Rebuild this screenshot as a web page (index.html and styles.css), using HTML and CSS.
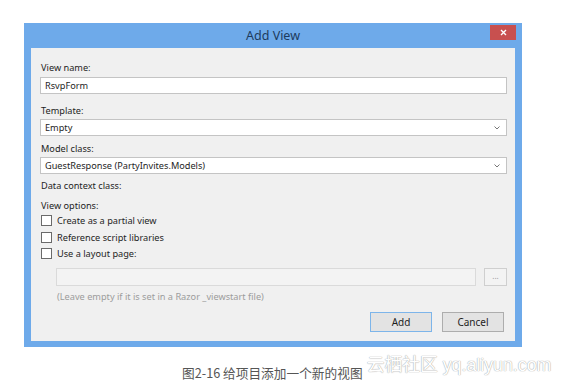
FILE: index.html
```html
<!DOCTYPE html>
<html lang="zh">
<head>
  <meta charset="UTF-8">
  <title>Add View</title>
  <meta name="viewport" content="width=device-width, initial-scale=1.0">
  <link rel="stylesheet" href="styles.css">
</head>
<body>
  <div class="window">
    <div class="titlebar">
      <span></span>
      <span class="title">Add View</span>
      <span class="close">
        <svg width="7" height="7" viewBox="0 0 7 7"><path d="M1 1L6 6M6 1L1 6" stroke="#fff" stroke-width="1.4"/></svg>
      </span>
    </div>

    <div class="content">
      <div class="label first">View name:</div>
      <div class="field name">RsvpForm</div>

      <div class="label">Template:</div>
      <div class="field select">
        <span>Empty</span>
        <svg class="arrow" width="6" height="4" viewBox="0 0 6 4"><path d="M0.5 0.5L3 3L5.5 0.5" fill="none" stroke="#777" stroke-width="1"/></svg>
      </div>

      <div class="label">Model class:</div>
      <div class="field select">
        <span>GuestResponse (PartyInvites.Models)</span>
        <svg class="arrow" width="6" height="4" viewBox="0 0 6 4"><path d="M0.5 0.5L3 3L5.5 0.5" fill="none" stroke="#777" stroke-width="1"/></svg>
      </div>

      <div class="label context">Data context class:</div>
      <div class="label options">View options:</div>

      <div class="check"><span class="box"></span>Create as a partial view</div>
      <div class="check mid"><span class="box"></span>Reference script libraries</div>
      <div class="check"><span class="box"></span>Use a layout page:</div>

      <div class="layout-row">
        <div class="field disabled"></div>
        <div class="browse">...</div>
      </div>
      <div class="hint">(Leave empty if it is set in a Razor _viewstart file)</div>

      <div class="buttons">
        <div class="btn default">Add</div>
        <div class="btn">Cancel</div>
      </div>
    </div>
  </div>

  <div class="caption-row">
    <span class="caption">图2-16 给项目添加一个新的视图</span>
    <span class="watermark">云栖社区 yq.aliyun.com</span>
  </div>
</body>
</html>
```

FILE: styles.css
```css
body {
  margin: 0;
  background: #fff;
  font-family: 'Noto Sans', 'Open Sans', sans-serif;
}

.window {
  width: 484px;
  margin: 23px 0 0 24px;
  background: #6eaaea;
  border: 0 solid #6eaaea;
  border-width: 0 7px 6px;
}

.titlebar {
  height: 25px;
  display: grid;
  grid-template-columns: 1fr auto 1fr;
  align-items: start;
}

.title {
  font-size: 12.5px;
  line-height: 25px;
  color: #1d3b5e;
}

.close {
  justify-self: end;
  margin: 2px -1px 0 0;
  width: 26px;
  height: 15px;
  background: #c8504f;
  display: flex;
  align-items: center;
  justify-content: center;
}

.content {
  background: #f0f0f0;
  padding: 14px 8px 9px 9px;
  font-size: 9.2px;
  color: #1e1e1e;
}

.label {
  height: 12px;
  line-height: 12px;
  padding-left: 1px;
  margin: 7px 0 2px;
}

.label.first {
  margin-top: 0;
  margin-bottom: 3px;
}

.field.name + .label {
  margin-top: 11px;
}

.label.context {
  margin-top: 6px;
}

.label.options {
  margin-top: 8px;
  margin-bottom: 0;
}

.field {
  height: 15px;
  line-height: 15px;
  background: #fff;
  border: 1px solid #c4c4c4;
  padding: 0 4px;
  display: flex;
  align-items: center;
  justify-content: space-between;
}

.arrow {
  margin-right: 2px;
}

.check {
  height: 17px;
  display: flex;
  align-items: center;
  gap: 5px;
  padding-left: 1px;
}

.check.mid {
  height: 16px;
}

.box {
  width: 9px;
  height: 9px;
  background: #fff;
  border: 1px solid #6a6a6a;
}

.layout-row {
  display: flex;
  gap: 8px;
  margin: 6px 0 0 16px;
}

.field.disabled {
  flex: 1;
  height: 16px;
  background: #f3f3f3;
  border-color: #dadada;
}

.browse {
  width: 21px;
  height: 16px;
  line-height: 14px;
  text-align: center;
  border: 1px solid #cfcfcf;
  background: #f3f3f3;
  color: #999;
  font-size: 8px;
}

.hint {
  margin: 5px 0 0 17px;
  line-height: 12px;
  color: #9c9c9c;
}

.buttons {
  display: flex;
  justify-content: flex-end;
  gap: 10px;
  margin: 9px 3px 0 0;
}

.btn {
  width: 60px;
  height: 18px;
  line-height: 18px;
  text-align: center;
  background: #e3e3e3;
  border: 1px solid #adadad;
  font-size: 10px;
}

.btn.default {
  border-color: #7db5ea;
}

.caption-row {
  display: flex;
  align-items: flex-end;
  gap: 4px;
  margin: 8px 0 0 182px;
}

.caption {
  font-family: 'Noto Sans CJK SC', sans-serif;
  font-size: 12.7px;
  line-height: 16px;
  color: #555;
}

.watermark {
  font-family: 'Liberation Sans', 'Noto Sans CJK SC', sans-serif;
  font-size: 17.8px;
  line-height: 20px;
  margin-bottom: 6px;
  color: #fff;
  text-shadow: 0 0 1px #aaa, 0 0 1px #aaa;
}
```
